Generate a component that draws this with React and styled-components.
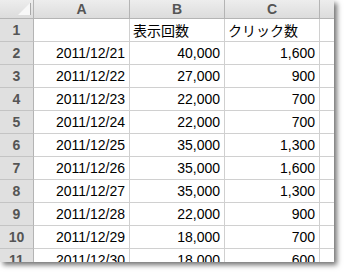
import React from 'react';
import styled, { createGlobalStyle } from 'styled-components';

const GlobalStyle = createGlobalStyle`
  body {
    margin: 0;
    background: #ffffff;
    font-family: "Liberation Sans", Arial, "Noto Sans CJK JP", sans-serif;
  }
`;

const rows = [
  ['', '表示回数', 'クリック数'],
  ['2011/12/21', '40,000', '1,600'],
  ['2011/12/22', '27,000', '900'],
  ['2011/12/23', '22,000', '700'],
  ['2011/12/24', '22,000', '700'],
  ['2011/12/25', '35,000', '1,300'],
  ['2011/12/26', '35,000', '1,600'],
  ['2011/12/27', '35,000', '1,300'],
  ['2011/12/28', '22,000', '900'],
  ['2011/12/29', '18,000', '700'],
  ['2011/12/30', '18,000', '600'],
];

const Sheet = () => {
  return (
    <Page>
      <GlobalStyle />
      <Frame>
        <Grid>
          <Corner>
            <CornerMark />
          </Corner>
          <ColHead>A</ColHead>
          <ColHead>B</ColHead>
          <ColHead>C</ColHead>
          <ColHead last />
          {rows.map((r, i) => (
            <React.Fragment key={i}>
              <RowHead>{i + 1}</RowHead>
              {r.map((v, j) => (
                <Cell key={j} align={i === 0 ? 'left' : 'right'}>
                  {v}
                </Cell>
              ))}
              <Cell last />
            </React.Fragment>
          ))}
        </Grid>
      </Frame>
    </Page>
  );
};

const Page = styled.div`
  width: 347px;
  height: 273px;
  overflow: hidden;
`;

const Frame = styled.div`
  width: 334px;
  height: 262px;
  overflow: hidden;
  background: #fff;
  box-shadow: 3px 3px 5px rgba(0, 0, 0, 0.55);
`;

const Grid = styled.div`
  display: grid;
  grid-template-columns: 34px 96px 95px 95px 14px;
  grid-template-rows: 19px repeat(11, 23px);
`;

const headBg = `
  background: linear-gradient(#ededed, #dcdcdc);
  color: #555;
  font-weight: bold;
  font-size: 14px;
`;

const Corner = styled.div`
  ${headBg}
  position: relative;
  box-sizing: border-box;
  border-right: 1px solid #b4b4b4;
  border-bottom: 1px solid #b4b4b4;
`;

const CornerMark = styled.div`
  position: absolute;
  right: 3px;
  bottom: 3px;
  width: 0;
  height: 0;
  border-left: 12px solid transparent;
  border-bottom: 12px solid #f8f8f8;
  &::after {
    content: '';
    position: absolute;
    right: -1px;
    top: 0;
    width: 1px;
    height: 12px;
    background: #a8a8a8;
  }
`;

const ColHead = styled.div`
  ${headBg}
  box-sizing: border-box;
  border-right: ${(p) => (p.last ? 'none' : '1px solid #b4b4b4')};
  border-bottom: 1px solid #b4b4b4;
  display: flex;
  align-items: center;
  justify-content: center;
  line-height: 1;
`;

const RowHead = styled.div`
  background: #e0e0e0;
  color: #555;
  font-weight: bold;
  font-size: 14px;
  box-sizing: border-box;
  border-right: 1px solid #b4b4b4;
  border-bottom: 1px solid #c4c4c4;
  display: flex;
  align-items: center;
  justify-content: center;
`;

const Cell = styled.div`
  box-sizing: border-box;
  border-right: ${(p) => (p.last ? 'none' : '1px solid #d0d0d0')};
  border-bottom: 1px solid #d0d0d0;
  display: flex;
  align-items: center;
  justify-content: ${(p) => (p.align === 'left' ? 'flex-start' : 'flex-end')};
  padding: 0 4px 0 3px;
  font-size: 14px;
  color: #000;
  white-space: nowrap;
`;

export default Sheet;
